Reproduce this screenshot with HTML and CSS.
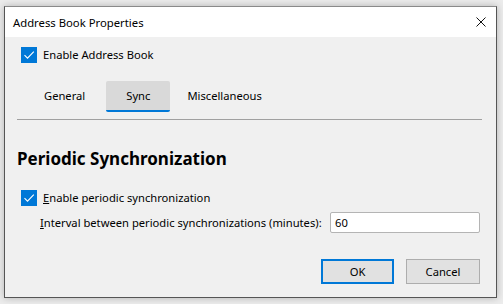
FILE: index.html
```html
<!DOCTYPE html>
<html lang="en">
<head>
<meta charset="utf-8">
<title>Address Book Properties</title>
<link rel="stylesheet" href="styles.css">
</head>
<body>
<div class="window">
  <div class="titlebar">
    <span class="title">Address Book Properties</span>
    <svg class="close" width="10" height="10" viewBox="0 0 10 10"><path d="M0.5 0.5 L9.5 9.5 M9.5 0.5 L0.5 9.5" stroke="#111" stroke-width="1" fill="none"/></svg>
  </div>
  <div class="content">
    <label class="check first">
      <span class="box"><svg width="16" height="16" viewBox="0 0 16 16"><path d="M3.5 8.2 L6.5 11.2 L12.8 4.6" stroke="#fff" stroke-width="1.1" fill="none"/></svg></span>
      <span>Enable Address Book</span>
    </label>
    <div class="tabs">
      <div class="tab">General</div>
      <div class="tab active">Sync</div>
      <div class="tab last">Miscellaneous</div>
    </div>
    <div class="separator"></div>
    <h2 class="heading">Periodic Synchronization</h2>
    <label class="check second">
      <span class="box"><svg width="16" height="16" viewBox="0 0 16 16"><path d="M3.5 8.2 L6.5 11.2 L12.8 4.6" stroke="#fff" stroke-width="1.1" fill="none"/></svg></span>
      <span><u>E</u>nable periodic synchronization</span>
    </label>
    <div class="interval">
      <span class="label"><u>I</u>nterval between periodic synchronizations (minutes):</span>
      <div class="input">60</div>
    </div>
    <div class="buttons">
      <div class="btn default">OK</div>
      <div class="btn">Cancel</div>
    </div>
  </div>
</div>
</body>
</html>
```
FILE: styles.css
```css
html, body {
  margin: 0;
  padding: 0;
}
body {
  width: 503px;
  height: 304px;
  background: #ececec;
  padding: 6px 0 0 4px;
  box-sizing: border-box;
  font-family: "Noto Sans", "Open Sans", sans-serif;
  font-size: 11.2px;
  color: #000;
  overflow: hidden;
}
.window {
  width: 493px;
  height: 292px;
  box-sizing: border-box;
  border: 1px solid #555;
  border-top-color: #8a8a8a;
  background: #f0f0f0;
  box-shadow: 0 0 7px rgba(0,0,0,0.25);
  display: flex;
  flex-direction: column;
}
.titlebar {
  height: 30px;
  background: #fff;
  display: flex;
  align-items: center;
  justify-content: space-between;
  padding: 0 10px 0 8px;
  flex-shrink: 0;
}
.title {
  font-size: 11.3px;
  color: #000;
}
.close {
  display: block;
  margin-top: -1px;
}
.content {
  padding: 10px 14px 0 12px;
  display: flex;
  flex-direction: column;
}
.check {
  display: flex;
  align-items: center;
  gap: 6px;
  margin-left: 4px;
  height: 16px;
  line-height: 16px;
}
.box {
  width: 16px;
  height: 16px;
  background: #0078d7;
  display: block;
  flex-shrink: 0;
}
.box svg { display: block; }
.tabs {
  display: flex;
  margin-top: 18px;
  margin-left: 7px;
  gap: 1px;
}
.tab {
  height: 31px;
  line-height: 30px;
  padding: 0 20px;
  box-sizing: border-box;
  border-radius: 2px;
}
.tab.last {
  padding-left: 16px;
}
.tab.active {
  background: #d9d9d9;
  border-bottom: 2px solid #0078d7;
  line-height: 29px;
}
.separator {
  margin-top: 7px;
  height: 1px;
  background: #a0a0a0;
}
.heading {
  margin: 27px 0 0 0;
  font-size: 17px;
  font-weight: 700;
  line-height: 24px;
}
.check.second {
  margin-top: 19px;
}
.interval {
  display: flex;
  align-items: center;
  justify-content: space-between;
  margin-top: 6px;
  padding-left: 23px;
  margin-right: 2px;
}
.input {
  width: 150px;
  height: 21px;
  box-sizing: border-box;
  border: 1px solid #b4b4b4;
  border-radius: 2px;
  background: #fff;
  padding-left: 4px;
  line-height: 19px;
}
.buttons {
  display: flex;
  justify-content: flex-end;
  gap: 12px;
  margin-top: 26px;
  margin-right: 2px;
}
.btn {
  width: 74px;
  height: 25px;
  box-sizing: border-box;
  border: 1px solid #adadad;
  background: #e1e1e1;
  text-align: center;
  line-height: 23px;
}
.btn.default {
  width: 73px;
  border: 2px solid #0078d7;
  line-height: 21px;
}
```
